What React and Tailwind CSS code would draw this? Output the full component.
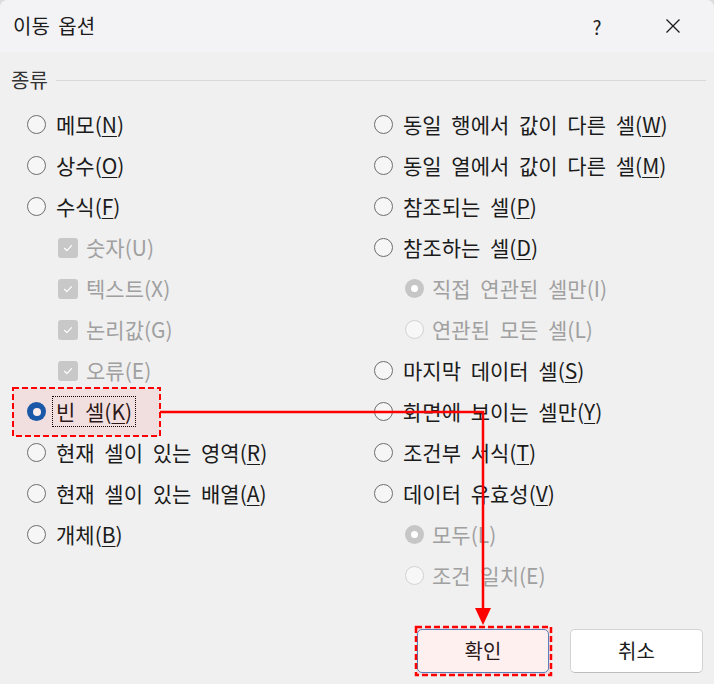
import React from 'react';

const leftOptions = [
  { type: 'radio', label: '메모', key: 'N' },
  { type: 'radio', label: '상수', key: 'O' },
  { type: 'radio', label: '수식', key: 'F' },
  { type: 'check', label: '숫자', key: 'U' },
  { type: 'check', label: '텍스트', key: 'X' },
  { type: 'check', label: '논리값', key: 'G' },
  { type: 'check', label: '오류', key: 'E' },
  { type: 'radio', label: '빈 셀', key: 'K', selected: true, focus: true },
  { type: 'radio', label: '현재 셀이 있는 영역', key: 'R' },
  { type: 'radio', label: '현재 셀이 있는 배열', key: 'A' },
  { type: 'radio', label: '개체', key: 'B' }
];

const rightOptions = [
  { type: 'radio', label: '동일 행에서 값이 다른 셀', key: 'W' },
  { type: 'radio', label: '동일 열에서 값이 다른 셀', key: 'M' },
  { type: 'radio', label: '참조되는 셀', key: 'P' },
  { type: 'radio', label: '참조하는 셀', key: 'D' },
  { type: 'sub', label: '직접 연관된 셀만', key: 'I', selected: true },
  { type: 'sub', label: '연관된 모든 셀', key: 'L' },
  { type: 'radio', label: '마지막 데이터 셀', key: 'S' },
  { type: 'radio', label: '화면에 보이는 셀만', key: 'Y' },
  { type: 'radio', label: '조건부 서식', key: 'T' },
  { type: 'radio', label: '데이터 유효성', key: 'V' },
  { type: 'sub', label: '모두', key: 'L', selected: true },
  { type: 'sub', label: '조건 일치', key: 'E' }
];

function Radio({ selected }) {
  if (selected) {
    return (
      <span className="w-[19px] h-[19px] rounded-full bg-[#0a5fb4] flex items-center justify-center shrink-0">
        <span className="w-[8px] h-[8px] rounded-full bg-white" />
      </span>
    );
  }
  return <span className="w-[19px] h-[19px] rounded-full border-[1.5px] border-[#6e6e6e] bg-[#f6f6f6] shrink-0" />;
}

function DisabledRadio({ selected }) {
  if (selected) {
    return (
      <span className="w-[19px] h-[19px] rounded-full bg-[#c6c6c6] flex items-center justify-center shrink-0">
        <span className="w-[7px] h-[7px] rounded-full bg-white" />
      </span>
    );
  }
  return <span className="w-[19px] h-[19px] rounded-full border border-[#d2d2d2] bg-[#f7f7f7] shrink-0" />;
}

function DisabledCheck() {
  return (
    <span className="w-[20px] h-[20px] rounded-[3px] bg-[#c8c8c8] flex items-center justify-center shrink-0">
      <svg className="w-[12px] h-[12px]" viewBox="0 0 12 12" fill="none" stroke="#ffffff" strokeWidth="1.2">
        <path d="M2.5 6.3l2.4 2.3 4.6-5" strokeLinecap="round" strokeLinejoin="round" />
      </svg>
    </span>
  );
}

function OptionRow({ option }) {
  // 비활성 항목 (체크박스, 하위 라디오)
  if (option.type === 'check' || option.type === 'sub') {
    return (
      <div className="h-[41px] flex items-center pl-[31px] gap-[8px]">
        {option.type === 'check' ? <DisabledCheck /> : <DisabledRadio selected={option.selected} />}
        <span className="text-[#a0a0a0]">{option.label}({option.key})</span>
      </div>
    );
  }
  return (
    <div className="h-[41px] flex items-center gap-[10px]">
      <Radio selected={option.selected} />
      <span
        className={`text-[#1b1b1b] ${option.focus ? 'border border-dotted border-black px-[3px] py-[4px] -ml-[4px]' : ''}`}
      >
        {option.label}(<u className="underline-offset-[3px] decoration-1">{option.key}</u>)
      </span>
    </div>
  );
}

function Annotation() {
  return (
    <svg className="absolute inset-0 pointer-events-none" width="714" height="684" viewBox="0 0 714 684">
      <rect x="13" y="388" width="147" height="48" fill="rgba(255,0,0,0.07)" stroke="#ff0000" strokeWidth="2" strokeDasharray="6 3" />
      <path d="M160 412 H483 V612" fill="none" stroke="#ff0000" strokeWidth="2.5" />
      <polygon points="475,608 491,608 483,625" fill="#ff0000" />
      <rect x="416" y="627" width="135" height="48" fill="rgba(255,0,0,0.06)" stroke="#ff0000" strokeWidth="2.5" strokeDasharray="6 3" />
    </svg>
  );
}

export default function App() {
  return (
    <div className="w-[714px] h-[684px] bg-[#dcdcdc] overflow-hidden">
      <div className="relative w-[714px] h-[684px] bg-[#f0f0f0] rounded-t-[8px] overflow-hidden font-['Noto_Sans_CJK_KR','Liberation_Sans',sans-serif] text-[21px] leading-none [word-spacing:5px]">
        {/* 제목 표시줄 */}
        <div className="h-[52px] bg-[#f3f3f6] flex items-center justify-between text-[20px] [word-spacing:4px]">
          <span className="pl-[13px] text-[#1b1b1b]">이동 옵션</span>
          <div className="flex h-full">
            <div className="w-[78px] h-full flex items-center justify-center text-[#1b1b1b] text-[19px]">?</div>
            <div className="w-[78px] h-full flex items-center justify-center pr-[4px]">
              <svg className="w-[16px] h-[16px]" viewBox="0 0 16 16" fill="none" stroke="#1b1b1b" strokeWidth="1.3">
                <path d="M1.5 1.5l13 13M14.5 1.5l-13 13" />
              </svg>
            </div>
          </div>
        </div>

        {/* 종류 */}
        <div className="mt-[14px] h-[28px] flex items-center pl-[11px] pr-[8px] gap-[8px] text-[20px]">
          <span className="text-[#333333]">종류</span>
          <div className="flex-1 h-px bg-[#d9d9d9]" />
        </div>

        {/* 옵션 목록 */}
        <div className="mt-[10px] pl-[27px] grid grid-cols-[347px_1fr]">
          <div className="flex flex-col">
            {leftOptions.map((o, i) => (
              <OptionRow key={i} option={o} />
            ))}
          </div>
          <div className="flex flex-col">
            {rightOptions.map((o, i) => (
              <OptionRow key={i} option={o} />
            ))}
          </div>
        </div>

        {/* 버튼 */}
        <div className="mt-[33px] flex justify-end gap-[21px] pr-[11px]">
          <button className="w-[132px] h-[44px] rounded-[5px] bg-white border border-[#4f86c6] text-[#1b1b1b] text-[20px]">
            확인
          </button>
          <button className="w-[133px] h-[44px] rounded-[5px] bg-white border border-[#d3d3d3] border-b-[#bdbdbd] text-[#1b1b1b] text-[20px]">
            취소
          </button>
        </div>

        <Annotation />
      </div>
    </div>
  );
}
